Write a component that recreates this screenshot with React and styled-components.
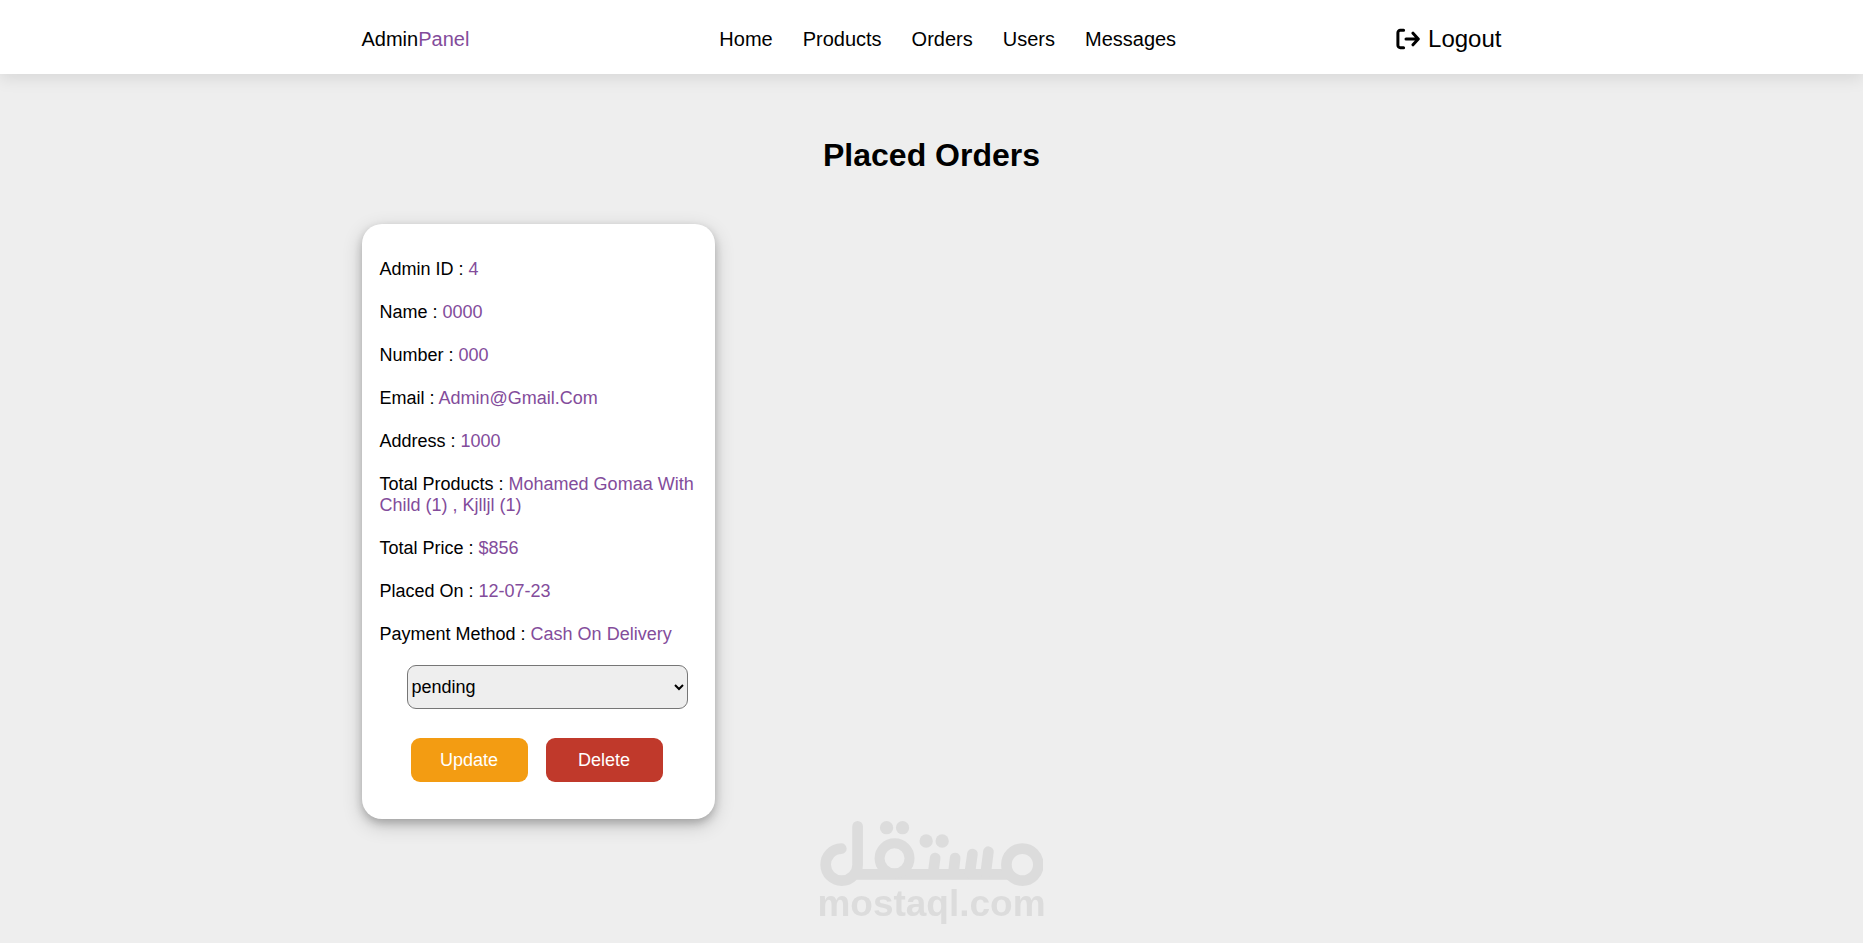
import React, { useState } from "react"
import styled, { createGlobalStyle } from "styled-components"

const GlobalStyle = createGlobalStyle`
  * {
    box-sizing: border-box;
    margin: 0;
    padding: 0;
  }
  body {
    background: #eee;
    color: #000;
    font-family: Arial, "Liberation Sans", sans-serif;
    font-size: 18px;
  }
  a {
    color: inherit;
    text-decoration: none;
  }
`

const Header = styled.header`
  position: relative;
  background: #fff;
  padding: 25px 20px 21px;
  box-shadow: 0 4px 16px rgba(0, 0, 0, 0.1);
`

const HeaderInner = styled.div`
  display: flex;
  align-items: center;
  justify-content: space-between;
  max-width: 1140px;
  margin: 0 auto;
  font-size: 20px;
  line-height: 28px;
`

const Accent = styled.span`
  color: #834c9b;
`

const Nav = styled.nav`
  display: flex;
  a {
    margin-left: 30px;
  }
`

const Logout = styled.a`
  display: flex;
  align-items: center;
  gap: 8px;
  font-size: 24px;
`

const Main = styled.main`
  max-width: 1180px;
  margin: 0 auto;
  padding: 62px 20px 40px;
`

const Title = styled.h1`
  font-size: 32px;
  line-height: 38px;
  text-align: center;
  margin-bottom: 50px;
`

const Orders = styled.section`
  display: grid;
  grid-template-columns: repeat(3, 1fr);
  gap: 40px;
  @media (max-width: 991px) {
    grid-template-columns: 1fr;
  }
`

const Card = styled.article`
  background: #fff;
  border-radius: 20px;
  padding: 35px 18px 36px;
  box-shadow: 0 4px 8px rgba(0, 0, 0, 0.2), 0 6px 20px rgba(0, 0, 0, 0.19);
`

const Details = styled.div`
  display: flex;
  flex-direction: column;
  gap: 22px;
  line-height: 21px;
`

const StatusForm = styled.form`
  padding: 20px 9px 0 27px;
`

const Select = styled.select`
  display: block;
  width: 100%;
  height: 44px;
  border: 1px solid #767676;
  border-radius: 9px;
  background: #eee;
  color: #000;
  font: inherit;
`

const Buttons = styled.div`
  display: flex;
  gap: 18px;
  padding: 29px 0 1px 4px;
`

const Button = styled.button`
  width: 117px;
  height: 44px;
  border: none;
  border-radius: 9px;
  background: ${props => props.$color};
  color: #fff;
  font: inherit;
  cursor: pointer;
`

const Watermark = styled.div`
  position: fixed;
  left: 0;
  right: 0;
  bottom: 21px;
  display: flex;
  flex-direction: column;
  align-items: center;
  color: #dcdcdc;
  font-size: 37px;
  font-weight: bold;
  line-height: 36px;
  pointer-events: none;
`

const links = ["Home", "Products", "Orders", "Users", "Messages"]

const order = [
  { label: "Admin ID", value: "4" },
  { label: "Name", value: "0000" },
  { label: "Number", value: "000" },
  { label: "Email", value: "Admin@Gmail.Com" },
  { label: "Address", value: "1000" },
  { label: "Total Products", value: "Mohamed Gomaa With Child (1) , Kjlljl (1)" },
  { label: "Total Price", value: "$856" },
  { label: "Placed On", value: "12-07-23" },
  { label: "Payment Method", value: "Cash On Delivery" },
]

const LogoutIcon = () => (
  <svg width="24" height="22" viewBox="0 0 24 22" fill="none" stroke="currentColor" strokeLinecap="round" strokeLinejoin="round" aria-hidden="true">
    <path strokeWidth="3" d="M7.6 2.3H4.3a2.4 2.4 0 0 0-2.4 2.4v12.6a2.4 2.4 0 0 0 2.4 2.4h3.3" />
    <path strokeWidth="3" d="M10 11h12M17 5.2l5.3 5.8-5.3 5.8" />
  </svg>
)

const MostaqlMark = () => (
  <svg width="223" height="65" viewBox="57 34 670 195" fill="none" stroke="currentColor" strokeLinecap="round" aria-hidden="true">
    <path strokeWidth="32" d="M121 117a48 48 0 1 0 49 48V50M165 194H622" />
    <circle cx="665" cy="165" r="48" strokeWidth="32" />
    <circle cx="281" cy="146" r="45" strokeWidth="30" />
    <path strokeWidth="32" d="M403 145l-6 45M463 145l-5 45M515 133l-8 57M563 126l-8 64" />
    <g fill="currentColor" stroke="none">
      <circle cx="257" cy="54" r="20" />
      <circle cx="305" cy="54" r="20" />
      <circle cx="376" cy="94" r="20" />
      <circle cx="424" cy="94" r="20" />
    </g>
  </svg>
)

const OrderCard = () => {
  const [status, setStatus] = useState("pending")

  return (
    <Card>
      <Details>
        {order.map(el => (
          <p key={el.label}>
            {el.label} : <Accent>{el.value}</Accent>
          </p>
        ))}
      </Details>
      <StatusForm onSubmit={e => e.preventDefault()}>
        <Select aria-label="Payment status" value={status} onChange={e => setStatus(e.target.value)}>
          <option value="pending">pending</option>
          <option value="completed">completed</option>
        </Select>
        <Buttons>
          <Button type="submit" $color="#f39c12">Update</Button>
          <Button type="button" $color="#c0392b">Delete</Button>
        </Buttons>
      </StatusForm>
    </Card>
  )
}

const App = () => {
  return (
    <>
      <GlobalStyle />
      <Header>
        <HeaderInner>
          <a href="#home">
            Admin<Accent>Panel</Accent>
          </a>
          <Nav>
            {links.map(el => (
              <a href={"#" + el.toLowerCase()} key={el}>{el}</a>
            ))}
          </Nav>
          <Logout href="#logout">
            <LogoutIcon />
            Logout
          </Logout>
        </HeaderInner>
      </Header>
      <Main>
        <Title>Placed Orders</Title>
        <Orders>
          <OrderCard />
        </Orders>
      </Main>
      <Watermark>
        <MostaqlMark />
        mostaql.com
      </Watermark>
    </>
  )
}

export default App
